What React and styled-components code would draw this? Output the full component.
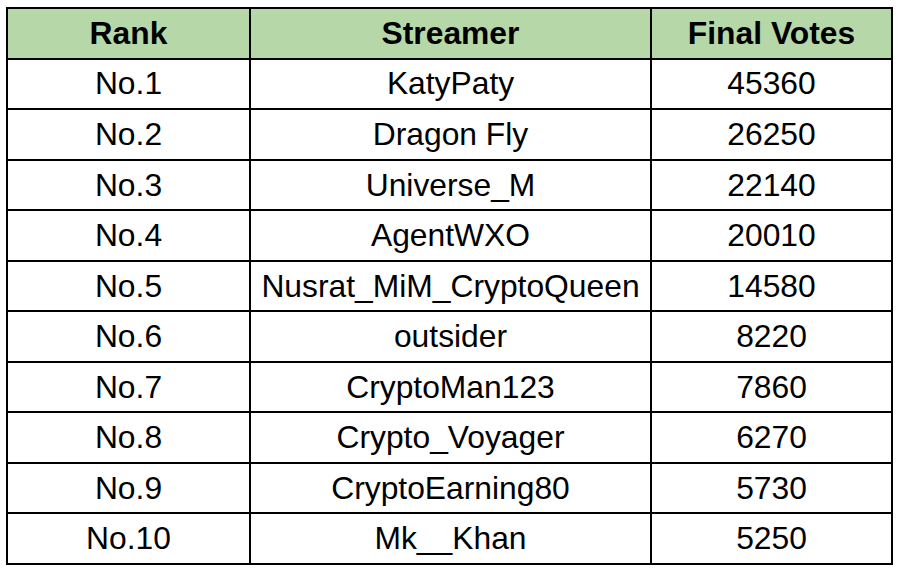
import React from "react";
import styled, { createGlobalStyle } from "styled-components";

const GlobalStyle = createGlobalStyle`
  html, body {
    margin: 0;
    padding: 0;
    background: #ffffff;
  }
  body {
    font-family: "Liberation Sans", Arial, sans-serif;
    color: #000000;
  }
`;

const Page = styled.div`
  padding: 7px 0 0 6px;
`;

const Grid = styled.div`
  display: grid;
  grid-template-columns: 241px 399px 239px;
  grid-template-rows: repeat(11, 1fr);
  gap: 2px;
  padding: 2px;
  width: 887px;
  height: 558px;
  box-sizing: border-box;
  background: #000000;
`;

const Cell = styled.div`
  display: flex;
  align-items: center;
  justify-content: center;
  padding-top: 1px;
  box-sizing: border-box;
  background: ${(props) => (props.$head ? "#b6d7a8" : "#ffffff")};
  font-size: 31.8px;
  font-weight: ${(props) => (props.$head ? 700 : 400)};
  line-height: 1;
  white-space: nowrap;
`;

const rows = [
  ["No.1", "KatyPaty", 45360],
  ["No.2", "Dragon Fly", 26250],
  ["No.3", "Universe_M", 22140],
  ["No.4", "AgentWXO", 20010],
  ["No.5", "Nusrat_MiM_CryptoQueen", 14580],
  ["No.6", "outsider", 8220],
  ["No.7", "CryptoMan123", 7860],
  ["No.8", "Crypto_Voyager", 6270],
  ["No.9", "CryptoEarning80", 5730],
  ["No.10", "Mk__Khan", 5250],
];

const App = () => {
  return (
    <Page>
      <GlobalStyle />
      <Grid>
        <Cell $head>Rank</Cell>
        <Cell $head>Streamer</Cell>
        <Cell $head>Final Votes</Cell>
        {rows.map(([rank, name, votes]) => (
          <React.Fragment key={rank}>
            <Cell>{rank}</Cell>
            <Cell>{name}</Cell>
            <Cell>{votes}</Cell>
          </React.Fragment>
        ))}
      </Grid>
    </Page>
  );
};

export default App;
